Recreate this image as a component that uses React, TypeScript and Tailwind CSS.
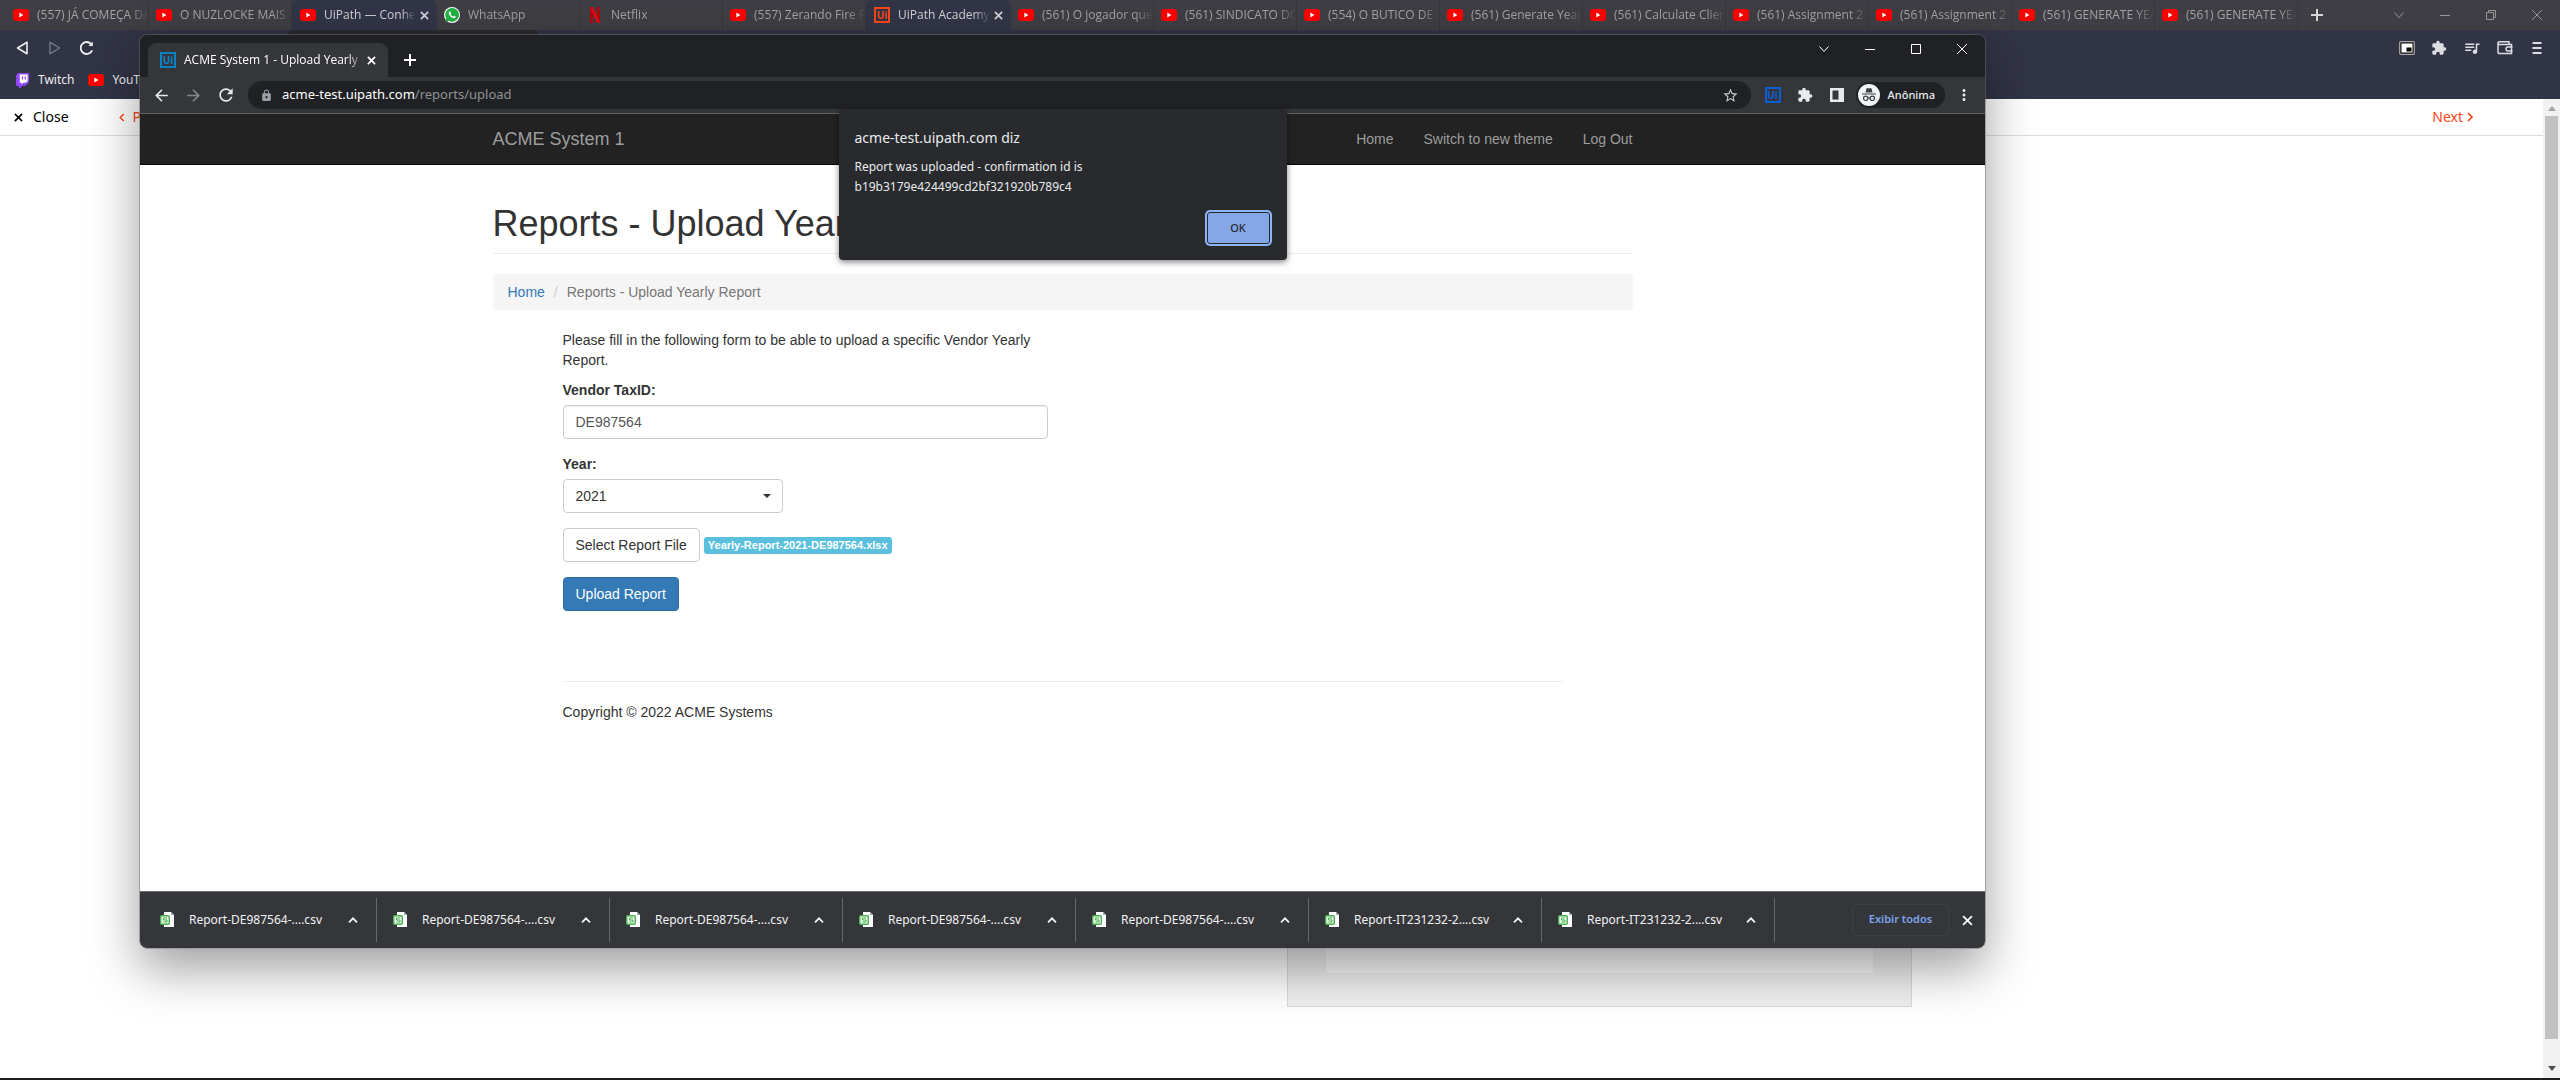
import React from "react";
import {
  MdArrowBack,
  MdArrowForward,
  MdExtension,
  MdLock,
  MdMoreVert,
  MdQueueMusic,
  MdRefresh,
  MdStarBorder,
} from "react-icons/md";
import { IoLogoWhatsapp } from "react-icons/io";

type IconKind = "youtube" | "whatsapp" | "netflix" | "uipath";

const tabs: { icon: IconKind; title: string; active?: boolean }[] = [
  { icon: "youtube", title: "(557) JÁ COMEÇA DA" },
  { icon: "youtube", title: "O NUZLOCKE MAIS D" },
  { icon: "youtube", title: "UiPath — Conhe", active: true },
  { icon: "whatsapp", title: "WhatsApp" },
  { icon: "netflix", title: "Netflix" },
  { icon: "youtube", title: "(557) Zerando Fire R" },
  { icon: "uipath", title: "UiPath Academy", active: true },
  { icon: "youtube", title: "(561) O jogador que" },
  { icon: "youtube", title: "(561) SINDICATO DO" },
  { icon: "youtube", title: "(554) O BUTICO DE B" },
  { icon: "youtube", title: "(561) Generate Yearl" },
  { icon: "youtube", title: "(561) Calculate Clien" },
  { icon: "youtube", title: "(561) Assignment 2 -" },
  { icon: "youtube", title: "(561) Assignment 2 -" },
  { icon: "youtube", title: "(561) GENERATE YEA" },
  { icon: "youtube", title: "(561) GENERATE YEA" },
];

const downloads = [
  "Report-DE987564-....csv",
  "Report-DE987564-....csv",
  "Report-DE987564-....csv",
  "Report-DE987564-....csv",
  "Report-DE987564-....csv",
  "Report-IT231232-2....csv",
  "Report-IT231232-2....csv",
];

function YouTube() {
  return (
    <svg viewBox="0 0 16 16" className="size-4 shrink-0">
      <rect y="2" width="16" height="12" rx="3" fill="#f00" />
      <path d="M6.3 5.6v4.8L10.4 8z" fill="#fff" />
    </svg>
  );
}

function Netflix() {
  return (
    <svg viewBox="0 0 16 16" className="size-4 shrink-0">
      <path d="M3 0h3v16H3zM10 0h3v16h-3z" fill="#b1060f" />
      <path d="M3 0h3l7 16h-3z" fill="#e50914" />
    </svg>
  );
}

function UiLogo({ tone }: { tone: "orange" | "sky" | "blue" }) {
  const tones = {
    orange: "border-[#fa4616] text-[#fa4616]",
    sky: "border-[#0c82c8] text-[#0c82c8]",
    blue: "border-[#0a5fd8] text-[#0a5fd8]",
  };
  return (
    <span
      className={`flex size-4 shrink-0 items-center justify-center border-2 font-['Open_Sans',sans-serif] text-[10px] leading-none font-bold ${tones[tone]}`}
    >
      Ui
    </span>
  );
}

function TabIcon({ kind }: { kind: IconKind }) {
  if (kind === "whatsapp")
    return (
      <span className="flex size-4 shrink-0 items-center justify-center rounded-full bg-white">
        <IoLogoWhatsapp className="size-4 text-[#1fb141]" />
      </span>
    );
  if (kind === "netflix") return <Netflix />;
  if (kind === "uipath") return <UiLogo tone="orange" />;
  return <YouTube />;
}

function Cross({ className, width = 2 }: { className: string; width?: number }) {
  return (
    <svg viewBox="0 0 10 10" className={className} fill="none" stroke="currentColor" strokeWidth={width}>
      <path d="M1 1l8 8M9 1l-8 8" />
    </svg>
  );
}

function Plus({ className }: { className: string }) {
  return (
    <svg viewBox="0 0 12 12" className={className} fill="none" stroke="currentColor" strokeWidth="2">
      <path d="M6 0v12M0 6h12" />
    </svg>
  );
}

function WindowButtons({ restored, className }: { restored: boolean; className: string }) {
  const cell = "flex h-7 w-[46px] items-center justify-center";
  const line = { fill: "none", stroke: "currentColor", strokeWidth: 1 };
  return (
    <div className={`flex ${className}`}>
      <button aria-label="Search tabs" className={cell}>
        <svg viewBox="0 0 10 10" className="size-[10px]" {...line}>
          <path d="M.5 2.5L5 7.5l4.5-5" />
        </svg>
      </button>
      <button aria-label="Minimize" className={cell}>
        <svg viewBox="0 0 10 10" className="size-[10px]" {...line}>
          <path d="M0 5.5h10" />
        </svg>
      </button>
      <button aria-label="Maximize" className={cell}>
        <svg viewBox="0 0 10 10" className="size-[10px]" {...line}>
          {restored ? <path d="M2.5 2.5V.5h7v7h-2M.5 2.5h7v7h-7z" /> : <path d="M.5.5h9v9h-9z" />}
        </svg>
      </button>
      <button aria-label="Close window" className={cell}>
        <svg viewBox="0 0 10 10" className="size-[10px]" {...line}>
          <path d="M0 0l10 10M10 0L0 10" />
        </svg>
      </button>
    </div>
  );
}

function BackBrowser() {
  return (
    <div className="flex min-h-screen flex-col border-b-2 border-[#1e1e20] bg-white">
      <div className="flex h-[30px] items-center justify-between bg-[#3e3e44]">
        <div className="flex h-full items-center pl-[6px] font-['Open_Sans','Noto_Sans',sans-serif] text-xs text-[#a2a2a6]">
          {tabs.map((t, i) => (
            <div
              key={i}
              className={
                t.active
                  ? "flex h-full w-[145px] items-center rounded-t-md bg-[#313547] pr-2 pl-2 text-[#d0d1d6]"
                  : "flex h-full w-[143px] items-center border-r border-[#36363b] pl-[7px]"
              }
            >
              <TabIcon kind={t.icon} />
              <span className="ml-2 min-w-0 flex-1 overflow-hidden [mask-image:linear-gradient(to_right,#000_84%,transparent)] whitespace-nowrap">
                {t.title}
              </span>
              {t.active && (
                <button aria-label="Close tab" className="ml-1">
                  <Cross className="size-[9px]" />
                </button>
              )}
            </div>
          ))}
          <button aria-label="New tab" className="ml-[13px] text-[#d6d6d8]">
            <Plus className="size-3" />
          </button>
        </div>
        <WindowButtons restored className="text-[#96969a]" />
      </div>

      <div className="flex h-[69px] flex-col bg-[#313445] text-xs text-[#eeeef0]">
        <div className="flex h-9 items-center justify-between pr-[15px] pl-4">
          <div className="flex items-center gap-[18px]">
            <button aria-label="Back">
              <svg viewBox="0 0 14 14" className="size-[14px]" fill="none" stroke="currentColor" strokeWidth="1.6" strokeLinejoin="round">
                <path d="M11 1.2v11.6L1.5 7z" />
              </svg>
            </button>
            <button aria-label="Forward" className="text-[#76788a]">
              <svg viewBox="0 0 14 14" className="size-[14px]" fill="none" stroke="currentColor" strokeWidth="1.4" strokeLinejoin="round">
                <path d="M2 1.2v11.6L11.5 7z" />
              </svg>
            </button>
            <button aria-label="Reload">
              <svg viewBox="0 0 14 14" className="size-[14px]" fill="none" stroke="currentColor" strokeWidth="1.9">
                <path d="M12.2 9.4A6 6 0 1 1 11 2.8" />
                <path d="M8.4 5h4.4V.6z" fill="currentColor" stroke="none" />
              </svg>
            </button>
          </div>
          <div className="flex items-center gap-4 text-[#dedee2]">
            <svg viewBox="0 0 16 16" className="size-4">
              <rect x=".7" y="1.7" width="14.6" height="12.6" rx="1" fill="#111" stroke="#aaa" strokeWidth="1.2" />
              <path d="M2.5 3.5h11v9h-11z" fill="#fff" />
              <path d="M7.5 7.5h5v4h-5z" fill="#000" />
            </svg>
            <MdExtension className="size-4" />
            <MdQueueMusic className="size-[18px]" />
            <svg viewBox="0 0 16 16" className="size-4" fill="none" stroke="currentColor" strokeWidth="1.5">
              <path d="M1 4.5h13.5v9H2a1 1 0 0 1-1-1V3a1.200 1.200 0 0 1 1.200-1.200H12V4" />
              <path d="M15.500 7H11a2 2 0 0 0 0 4h4.500" />
            </svg>
            <svg viewBox="0 0 16 16" className="size-4" fill="none" stroke="currentColor" strokeWidth="2">
              <path d="M3.500 3h9M3.500 8h9M3.500 13h9" />
            </svg>
          </div>
        </div>
        <div className="flex h-7 items-center gap-[14px] pl-[15px]">
          <a href="#twitch" className="flex items-center gap-2">
            <svg viewBox="0 0 16 16" className="size-[15px]">
              <path d="M3 0h12v9.500l-4 4H8L5.500 16H4v-2.500H1V3z" fill="#9147ff" />
              <path d="M5 1.500h8.500v7l-2 2H9l-2 1.800v-1.800H5z" fill="#fff" />
              <path d="M8 3.500v3.500M11 3.500v3.500" stroke="#9147ff" strokeWidth="1.300" />
            </svg>
            Twitch
          </a>
          <a href="#youtube" className="flex items-center gap-2">
            <YouTube />
            YouTube
          </a>
        </div>
      </div>

      <div className="flex flex-1">
        <div className="flex min-w-0 flex-1 flex-col">
          <div className="flex h-[37px] items-center justify-between border-b border-[#dcdcdc] px-[14px] text-sm">
            <div className="flex items-center gap-[50px]">
              <a href="#close" className="flex items-center gap-[10px] text-black">
                <Cross className="size-[9px]" width={1.8} />
                Close
              </a>
              <a href="#previous" className="flex items-center gap-2 text-[#fa4616]">
                <svg viewBox="0 0 6 10" className="h-[9px] w-[6px]" fill="none" stroke="currentColor" strokeWidth="1.600">
                  <path d="M5 1L1 5l4 4" />
                </svg>
                Previous
              </a>
            </div>
            <a href="#next" className="mr-[56px] flex items-center gap-1 text-[#fa4616]">
              Next
              <svg viewBox="0 0 6 10" className="h-[10px] w-[6px]" fill="none" stroke="currentColor" strokeWidth="1.600">
                <path d="M1 1l4 4-4 4" />
              </svg>
            </a>
          </div>
          <div className="flex flex-1 items-end justify-end pr-[631px] pb-[71px]">
            <div className="w-[625px] border border-[#dadada] bg-[#f0f0f0] px-[38px] pb-[33px]">
              <div className="h-40 bg-[#fbfbfb]" />
            </div>
          </div>
        </div>
        <div className="flex w-[17px] flex-col items-center gap-1 bg-[#f1f1f1] py-[6px]">
          <svg viewBox="0 0 8 5" className="h-[7px] w-2 shrink-0">
            <path d="M0 5l4-5 4 5z" fill="#a3a3a3" />
          </svg>
          <div className="w-[13px] grow bg-[#c1c1c1]" />
          <div className="h-[18px]" />
          <svg viewBox="0 0 8 5" className="h-[7px] w-2 shrink-0">
            <path d="M0 0l4 5 4-5z" fill="#505050" />
          </svg>
        </div>
      </div>
    </div>
  );
}

function CsvFile() {
  return (
    <svg viewBox="0 0 16 16" className="size-4 shrink-0">
      <path d="M5 0h7l3 3v12H5z" fill="#fff" />
      <path d="M12 0v3h3z" fill="#9aa" />
      <rect x="1.700" y="3.700" width="8.600" height="8.600" rx="1" fill="#eaf7ea" stroke="#4caf50" strokeWidth="1.400" />
      <path d="M8 6H4.500v2H8v2H4.500" fill="none" stroke="#4caf50" strokeWidth="1" />
    </svg>
  );
}

function Incognito() {
  return (
    <svg viewBox="0 0 22 22" className="size-[22px]">
      <circle cx="11" cy="11" r="11" fill="#f1f3f4" />
      <path d="M7.500 8.500l1-4 1-.5 1.500.5 1.500-.5 1 .5 1 4z" fill="#3c4043" />
      <path d="M4 10h14" stroke="#3c4043" strokeWidth="1.200" />
      <g fill="none" stroke="#3c4043" strokeWidth="1.200">
        <circle cx="7.700" cy="14.300" r="2.200" />
        <circle cx="14.300" cy="14.300" r="2.200" />
        <path d="M9.900 14.300q1.100-.8 2.200 0" />
      </g>
    </svg>
  );
}

function BrowserChrome() {
  return (
    <>
      <div className="flex h-[42px] items-start justify-between bg-[#202124]">
        <div className="flex items-center gap-4 pt-2 pl-2 font-['Open_Sans','Noto_Sans',sans-serif] text-xs text-white">
          <div className="flex h-[34px] w-[240px] items-center rounded-t-lg bg-[#35363a] px-3">
            <UiLogo tone="sky" />
            <span className="ml-2 min-w-0 flex-1 overflow-hidden [mask-image:linear-gradient(to_right,#000_92%,transparent)] whitespace-nowrap">
              ACME System 1 - Upload Yearly R
            </span>
            <button aria-label="Close tab" className="ml-1">
              <Cross className="size-[9px]" />
            </button>
          </div>
          <button aria-label="New tab">
            <Plus className="size-3" />
          </button>
        </div>
        <WindowButtons restored={false} className="text-white" />
      </div>
      <div className="flex h-[37px] items-center border-b border-[#5f6063] bg-[#35363a] px-3 text-[#e8eaed]">
        <div className="flex items-center gap-[13px]">
          <button aria-label="Back">
            <MdArrowBack className="size-[19px]" />
          </button>
          <button aria-label="Forward" className="text-[#87888b]">
            <MdArrowForward className="size-[19px]" />
          </button>
          <button aria-label="Reload">
            <MdRefresh className="size-5" />
          </button>
        </div>
        <div className="ml-3 flex h-7 flex-1 items-center rounded-full bg-[#202124] px-3">
          <MdLock className="size-[13px] text-[#9aa0a6]" />
          <div className="ml-[9px] flex-1 text-[13px] text-[#8f9296]">
            <span className="text-white">acme-test.uipath.com</span>/reports/upload
          </div>
          <MdStarBorder className="size-[17px] text-[#c4c7cb]" />
        </div>
        <div className="flex items-center gap-4 pl-[14px]">
          <UiLogo tone="blue" />
          <MdExtension className="size-4" />
          <svg viewBox="0 0 16 16" className="size-4">
            <path d="M1 1h14v14H1z" fill="#e8eaed" />
            <path d="M3.500 3.500h6v9h-6z" fill="#35363a" />
          </svg>
        </div>
        <button className="ml-[11px] flex h-[26px] items-center gap-2 rounded-full bg-[#202124] pr-[10px] pl-[2px] text-[11px] font-medium">
          <Incognito />
          Anônima
        </button>
        <button aria-label="Menu" className="ml-[10px]">
          <MdMoreVert className="size-[18px]" />
        </button>
      </div>
    </>
  );
}

function AcmePage() {
  const control = "h-[34px] rounded border border-[#ccc] px-3";
  return (
    <div className="flex flex-1 flex-col bg-white font-['Liberation_Sans',Arial,sans-serif] text-sm leading-5 text-[#333]">
      <nav className="flex h-[51px] border-b border-[#080808] bg-[#222] text-[#9d9d9d]">
        <div className="mx-auto flex w-full max-w-[1140px] items-center justify-between">
          <a href="#acme" className="text-lg">
            ACME System 1
          </a>
          <div className="flex gap-[30px]">
            <a href="#home">Home</a>
            <a href="#theme">Switch to new theme</a>
            <a href="#logout">Log Out</a>
          </div>
        </div>
      </nav>
      <div className="mx-auto w-full max-w-[1140px]">
        <h1 className="mt-[39px] border-b border-[#eee] pb-[10px] text-4xl leading-[39px]">Reports - Upload Yearly Report</h1>
        <ol className="mt-5 flex h-9 items-center rounded bg-[#f5f5f5] px-[15px] text-[#777]">
          <li>
            <a href="#home" className="text-[#337ab7]">
              Home
            </a>
          </li>
          <li className="px-[9px] text-[#ccc]">/</li>
          <li>Reports - Upload Yearly Report</li>
        </ol>
        <div className="mx-[70px] mt-5">
          <form className="w-[485px]">
            <p className="mb-[10px]">Please fill in the following form to be able to upload a specific Vendor Yearly Report.</p>
            <label htmlFor="tax" className="mb-[5px] block font-bold">
              Vendor TaxID:
            </label>
            <input id="tax" defaultValue="DE987564" className={`${control} block w-full text-[#555] shadow-[inset_0_1px_1px_rgba(0,0,0,0.08)]`} />
            <label htmlFor="year" className="mt-[15px] mb-[5px] block font-bold">
              Year:
            </label>
            <div className="relative w-[220px]">
              <select id="year" defaultValue="2021" className={`${control} block w-full appearance-none bg-white`}>
                <option>2021</option>
              </select>
              <svg viewBox="0 0 8 4" className="pointer-events-none absolute top-[15px] right-3 h-1 w-2">
                <path d="M0 0h8L4 4z" fill="#333" />
              </svg>
            </div>
            <div className="mt-[15px] flex items-center gap-1">
              <button type="button" className={`${control} whitespace-nowrap`}>
                Select Report File
              </button>
              <span className="rounded-[3px] bg-[#5bc0de] px-1 py-[3px] text-[11px] leading-[11px] font-bold text-white">
                Yearly-Report-2021-DE987564.xlsx
              </span>
            </div>
            <button type="button" className="mt-[15px] h-[34px] rounded border border-[#2e6da4] bg-[#337ab7] px-3 text-white">
              Upload Report
            </button>
          </form>
          <footer className="mt-[70px] border-t border-[#eee] pt-5">Copyright © 2022 ACME Systems</footer>
        </div>
      </div>
    </div>
  );
}

function DownloadBar() {
  return (
    <div className="flex h-[57px] items-center justify-between border-t border-[#6a6b6e] bg-[#35363a] pl-1 text-xs text-[#f1f3f4]">
      <div className="flex">
        {downloads.map((d, i) => (
          <div key={i} className="flex h-11 w-[233px] items-center border-r border-[#68696c] pr-[18px] pl-[15px]">
            <CsvFile />
            <span className="ml-[14px] flex-1 whitespace-nowrap">{d}</span>
            <button aria-label="Download options">
              <svg viewBox="0 0 10 6" className="h-[6px] w-[10px]" fill="none" stroke="currentColor" strokeWidth="1.800">
                <path d="M1 5.300l4-4 4 4" />
              </svg>
            </button>
          </div>
        ))}
      </div>
      <div className="flex items-center gap-[13px] pr-3">
        <button className="mb-px h-8 w-[97px] rounded border border-[#3f4044] text-[11px] font-semibold text-[#7ba5f0]">Exibir todos</button>
        <button aria-label="Close downloads">
          <Cross className="size-[11px]" width={1.8} />
        </button>
      </div>
    </div>
  );
}

function AlertDialog() {
  return (
    <div
      role="alertdialog"
      aria-label="acme-test.uipath.com diz"
      className="absolute top-[74px] left-1/2 flex h-[151px] w-[448px] -translate-x-1/2 flex-col rounded bg-[#292a2d] px-4 pt-[18px] text-[13px] text-[#e8eaed] shadow-[0_2px_6px_rgba(0,0,0,0.5)]"
    >
      <div className="text-sm leading-[22px]">acme-test.uipath.com diz</div>
      <p className="mt-2 text-xs leading-5">
        Report was uploaded - confirmation id is
        <br />
        b19b3179e424499cd2bf321920b789c4
      </p>
      <button className="mt-[15px] mr-px h-8 w-[63px] self-end rounded-[3px] border border-[#292a2d] bg-[#84a7e8] text-[11px] font-medium text-[#292a2d] ring-2 ring-[#8ab4f8]">
        OK
      </button>
    </div>
  );
}

export default function App() {
  return (
    <div className="relative min-h-screen overflow-hidden font-['Noto_Sans','Open_Sans',sans-serif]">
      <BackBrowser />
      <div className="absolute top-[30px] left-[288px] h-4 w-[250px] rounded-t bg-[#2a2b2f]" />
      <main className="absolute top-[34px] right-[574px] bottom-[131px] left-[139px] flex flex-col rounded-lg border border-[#5d5e62]/60 shadow-[0_20px_50px_rgba(0,0,0,0.38)]">
        <div className="flex flex-1 flex-col overflow-hidden rounded-[7px]">
          <BrowserChrome />
          <AcmePage />
          <DownloadBar />
        </div>
        <AlertDialog />
      </main>
    </div>
  );
}
